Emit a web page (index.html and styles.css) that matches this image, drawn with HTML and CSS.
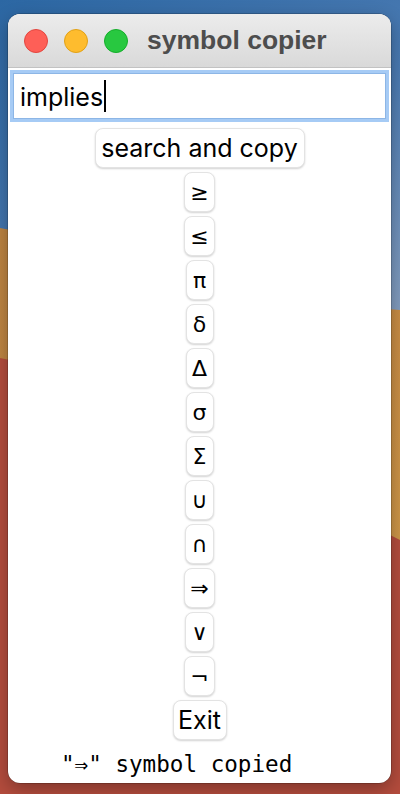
FILE: index.html
```html
<!DOCTYPE html>
<html>
<head>
<meta charset="utf-8">
<link rel="stylesheet" href="styles.css">
</head>
<body>
<svg class="wallpaper" width="400" height="794" viewBox="0 0 400 794" preserveAspectRatio="none">
  <defs>
    <linearGradient id="sky" x1="0" y1="0" x2="0.3" y2="1">
      <stop offset="0" stop-color="#2c67a3"/>
      <stop offset="0.35" stop-color="#4a7ab2"/>
      <stop offset="0.75" stop-color="#9aabc4"/>
      <stop offset="1" stop-color="#b9bec6"/>
    </linearGradient>
    <linearGradient id="sand" x1="0" y1="0" x2="1" y2="1">
      <stop offset="0" stop-color="#bd8442"/>
      <stop offset="0.6" stop-color="#c98d45"/>
      <stop offset="1" stop-color="#d4a24c"/>
    </linearGradient>
  </defs>
  <rect x="0" y="0" width="400" height="794" fill="url(#sky)"/>
  <path d="M0 228 C 120 250, 260 300, 400 310 L400 794 L0 794 Z" fill="url(#sand)"/>
  <path d="M0 358 C 120 380, 280 480, 400 540 L400 794 L0 794 Z" fill="#b44c3d"/>
</svg>
<div class="window">
  <div class="titlebar">
    <span class="light red"></span>
    <span class="light yellow"></span>
    <span class="light green"></span>
    <span class="title">symbol copier</span>
  </div>
  <div class="content">
    <div class="field"><span class="value">implies</span><span class="caret"></span></div>
    <button class="btn wide">search and copy</button>
    <button class="btn sym">≥</button>
    <button class="btn sym">≤</button>
    <button class="btn sym">π</button>
    <button class="btn sym">δ</button>
    <button class="btn sym">Δ</button>
    <button class="btn sym">σ</button>
    <button class="btn sym">Σ</button>
    <button class="btn sym">∪</button>
    <button class="btn sym">∩</button>
    <button class="btn sym">⇒</button>
    <button class="btn sym">∨</button>
    <button class="btn sym">¬</button>
    <button class="btn exit">Exit</button>
    <div class="status">"⇒" symbol copied</div>
  </div>
</div>
</body>
</html>
```
FILE: styles.css
```css
html, body {
  margin: 0;
  padding: 0;
}
body {
  width: 400px;
  height: 794px;
  overflow: hidden;
  position: relative;
  font-family: Inter, "Liberation Sans", sans-serif;
}
.wallpaper {
  position: absolute;
  left: 0;
  top: 0;
  z-index: 0;
}
.window {
  position: relative;
  z-index: 1;
  margin: 14px 0 0 8px;
  width: 383px;
  height: 769px;
  border-radius: 12px;
  overflow: hidden;
  background: #ffffff;
  box-shadow: 0 0 0 0.5px rgba(0,0,0,0.35), 0 6px 18px rgba(0,0,0,0.3);
  display: flex;
  flex-direction: column;
}
.titlebar {
  height: 53px;
  border-bottom: 1px solid #c2c2c2;
  background: linear-gradient(#ececec, #d9d9d9);
  display: flex;
  align-items: center;
  padding-left: 16px;
  gap: 16px;
}
.light {
  width: 24px;
  height: 24px;
  border-radius: 50%;
  box-sizing: border-box;
}
.red { background: #fe5f57; border: 1px solid #e2463f; }
.yellow { background: #febc2e; border: 1px solid #e1a116; }
.green { background: #28c840; border: 1px solid #14ae2a; }
.title {
  margin-left: 3px;
  font-family: "Liberation Sans", Arial, sans-serif;
  font-weight: bold;
  font-size: 26.5px;
  color: #4d4d4d;
}
.content {
  display: flex;
  flex-direction: column;
  align-items: center;
  gap: 4px;
  padding-top: 2px;
}
.field {
  align-self: stretch;
  margin: 0 2px 2px;
  height: 52px;
  box-sizing: border-box;
  border: 3px solid #a6cbf5;
  box-shadow: inset 0 0 0 1px #8db6e6;
  display: flex;
  align-items: center;
  padding-left: 7px;
  font-size: 25px;
  color: #000;
}
.value {
  position: relative;
  top: 1px;
}
.caret {
  width: 2px;
  height: 32px;
  background: #000;
  margin-left: 1px;
}
.btn {
  font-family: Inter, "Liberation Sans", sans-serif;
  background: #ffffff;
  border: 1px solid #e3e3e3;
  border-radius: 8px;
  box-shadow: 0 1px 2px rgba(0,0,0,0.18);
  color: #000;
  height: 40px;
  padding: 0;
  margin: 0;
  display: flex;
  align-items: center;
  justify-content: center;
}
.wide {
  width: 210px;
  font-size: 25px;
}
.sym {
  min-width: 28px;
  padding: 0 5px;
  font-family: "DejaVu Sans", sans-serif;
  font-size: 22px;
}
.exit {
  width: 54px;
  font-size: 25px;
}
.status {
  align-self: flex-start;
  margin-top: 7px;
  padding-left: 53px;
  font-family: "DejaVu Sans Mono", monospace;
  font-size: 22.6px;
  color: #000;
}
```
